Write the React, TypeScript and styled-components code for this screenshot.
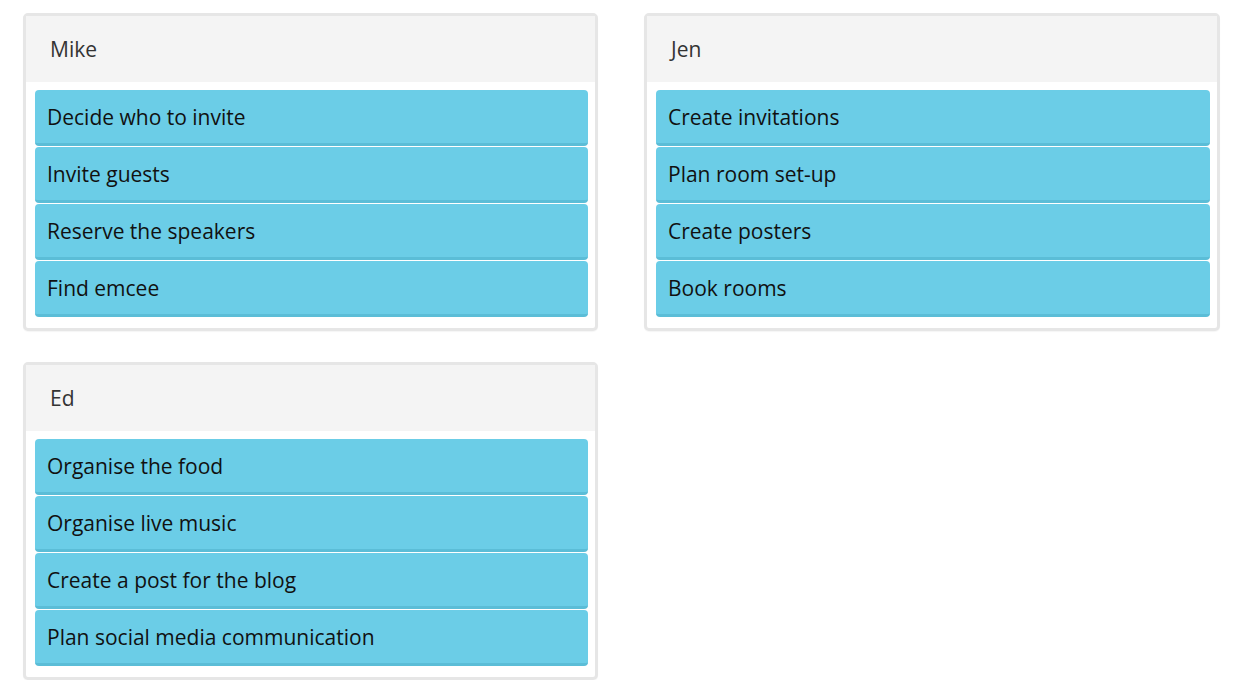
import React from "react";
import styled, { createGlobalStyle } from "styled-components";

const Global = createGlobalStyle`
  html, body { margin: 0; padding: 0; background: #ffffff; }
  body { font-family: "Open Sans", "Noto Sans", sans-serif; }
`;

const Board = styled.div`
  display: grid;
  grid-template-columns: 575px 576px;
  column-gap: 46px;
  row-gap: 31px;
  padding: 13px 0 0 23px;
  align-items: start;
`;

const Card = styled.section`
  border: 3px solid #e6e6e6;
  border-radius: 5px;
  background: #ffffff;
  box-shadow: 0 1px 1px rgba(0, 0, 0, 0.04);
  display: flex;
  flex-direction: column;
`;

const Header = styled.div`
  height: 66px;
  background: #f4f4f4;
  display: flex;
  align-items: center;
  padding-left: 24px;
  font-size: 21px;
  color: #333333;
`;

const List = styled.div`
  display: flex;
  flex-direction: column;
  gap: 1px;
  padding: 8px 7px 11px 9px;
`;

const Item = styled.div`
  height: 53px;
  box-sizing: content-box;
  background: #6bcde7;
  border-bottom: 3px solid #5bbdd7;
  border-radius: 4px;
  display: flex;
  align-items: center;
  padding-left: 12px;
  font-size: 21px;
  color: #111111;
`;

const columns = [
  { name: "Mike", items: ["Decide who to invite", "Invite guests", "Reserve the speakers", "Find emcee"] },
  { name: "Jen", items: ["Create invitations", "Plan room set-up", "Create posters", "Book rooms"] },
  { name: "Ed", items: ["Organise the food", "Organise live music", "Create a post for the blog", "Plan social media communication"] },
];

export default function App() {
  return (
    <>
      <Global />
      <Board>
        {columns.map((c) => (
          <Card key={c.name}>
            <Header>{c.name}</Header>
            <List>
              {c.items.map((t) => (
                <Item key={t}>{t}</Item>
              ))}
            </List>
          </Card>
        ))}
      </Board>
    </>
  );
}
